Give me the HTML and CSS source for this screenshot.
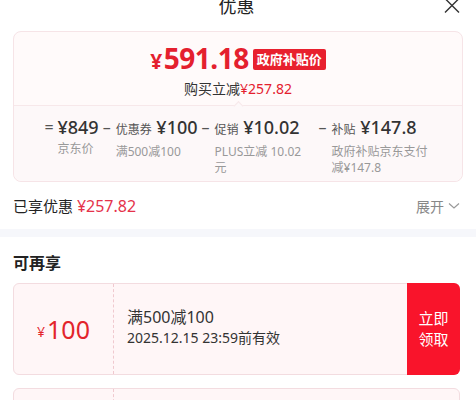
FILE: index.html
```html
<!doctype html>
<html>
<head>
    <meta charset="utf-8">
    <title>优惠</title>
    <link rel="stylesheet" href="styles.css">
</head>
<body>
    <div class="head">
        <span></span>
        <span class="head-title">优惠</span>
        <span class="close">
            <svg width="16" height="15" viewBox="0 0 16 15"><path d="M1 0.5 L15 14.5 M15 0.5 L1 14.5" stroke="#333" stroke-width="1.4" fill="none"/></svg>
        </span>
    </div>

    <div class="price-card">
        <div class="price-top">
            <div class="price-line">
                <span class="price"><span class="yen">¥</span>591.18</span>
                <span class="badge">政府补贴价</span>
            </div>
            <div class="save">购买立减<span class="red">¥257.82</span></div>
        </div>
        <div class="breakdown">
            <div class="item">
                <span class="sign">=</span>
                <div class="item-body">
                    <div class="item-val">¥849</div>
                    <div class="item-label">京东价</div>
                </div>
            </div>
            <div class="item">
                <span class="sign">–</span>
                <div class="item-body">
                    <div class="item-val"><small>优惠券</small> ¥100</div>
                    <div class="item-label">满500减100</div>
                </div>
            </div>
            <div class="item">
                <span class="sign">–</span>
                <div class="item-body">
                    <div class="item-val"><small>促销</small> ¥10.02</div>
                    <div class="item-label">PLUS立减 10.02 元</div>
                </div>
            </div>
            <div class="item">
                <span class="sign">–</span>
                <div class="item-body">
                    <div class="item-val"><small>补贴</small> ¥147.8</div>
                    <div class="item-label">政府补贴京东支付减¥147.8</div>
                </div>
            </div>
        </div>
    </div>

    <div class="enjoyed">
        <span>已享优惠 <span class="red">¥257.82</span></span>
        <span class="expand">展开
            <svg width="12" height="8" viewBox="0 0 12 8"><path d="M1 1.5 L6 6 L11 1.5" stroke="#999" stroke-width="1.2" fill="none"/></svg>
        </span>
    </div>

    <div class="band"></div>

    <div class="more">
        <h3 class="more-title">可再享</h3>
        <div class="coupon">
            <div class="coupon-amount"><span class="yen">¥</span>100</div>
            <div class="coupon-info">
                <div class="coupon-rule">满500减100</div>
                <div class="coupon-date">2025.12.15 23:59前有效</div>
            </div>
            <div class="coupon-btn">立即<br>领取</div>
        </div>
        <div class="coupon coupon-next">
            <div class="coupon-amount"></div>
            <div class="coupon-info"></div>
        </div>
    </div>
</body>
</html>
```

FILE: styles.css
```css
body {
    margin: 0;
    background: #fff;
    color: #333;
    font-family: "Noto Sans", "Noto Sans CJK SC", sans-serif;
    overflow: hidden;
}
.head {
    display: grid;
    grid-template-columns: 1fr auto 1fr;
    align-items: center;
    height: 26px;
    margin-top: -8px;
    padding: 0 16px 0 13px;
}
.head-title {
    font-size: 18px;
    color: #222;
}
.close {
    justify-self: end;
    display: flex;
}
.red {
    color: #e4202e;
}

/* price card */
.price-card {
    margin: 13px 13px 0;
    border: 1px solid #f6e4e7;
    border-radius: 8px;
    background: #fffafa;
}
.price-top {
    position: relative;
    display: flex;
    flex-direction: column;
    align-items: center;
    padding: 8px 0 6px;
    border-bottom: 1px solid #f7e8ea;
}
.price-top::after {
    content: "";
    position: absolute;
    bottom: -1px;
    left: 50%;
    width: 6px;
    height: 6px;
    margin-left: -3px;
    background: #fdf8f9;
    border-left: 1px solid #f7e8ea;
    border-top: 1px solid #f7e8ea;
    transform: translateY(50%) rotate(45deg);
}
.price-line {
    display: flex;
    align-items: center;
    gap: 4px;
}
.price {
    color: #e4202e;
    font-size: 28px;
    font-weight: 700;
    line-height: 36px;
    letter-spacing: -0.5px;
}
.price .yen {
    font-size: 21px;
    margin-right: 2px;
}
.badge {
    background: #e8202e;
    color: #fff;
    font-size: 13px;
    font-weight: 700;
    line-height: 21px;
    padding: 0 4px;
    border-radius: 2px;
}
.save {
    font-size: 14px;
    line-height: 20px;
    color: #333;
}
.breakdown {
    display: flex;
    justify-content: center;
    gap: 4px;
    padding: 9px 0 5px;
    background: #fdf8f9;
    border-radius: 0 0 8px 8px;
}
.item {
    display: flex;
    align-items: flex-start;
}
.sign {
    width: 13px;
    font-size: 16px;
    line-height: 24px;
    color: #555;
}
.item-val {
    font-size: 18px;
    font-weight: 500;
    line-height: 24px;
    color: #333;
    white-space: nowrap;
}
.item-val small {
    font-size: 12px;
    font-weight: 400;
    color: #555;
}
.item-label {
    max-width: 100px;
    margin-top: 2px;
    font-size: 12px;
    line-height: 16px;
    color: #999;
}

/* enjoyed row */
.enjoyed {
    display: flex;
    justify-content: space-between;
    align-items: center;
    padding: 0 16px 0 13px;
    height: 47px;
    font-size: 15px;
    color: #222;
}
.enjoyed .red {
    color: #e5324a;
    font-size: 16px;
}
.expand {
    display: flex;
    align-items: center;
    gap: 4px;
    font-size: 14px;
    color: #888;
}
.band {
    height: 8px;
    background: #f6f7fb;
}

/* coupons */
.more {
    padding: 0 16px 0 13px;
}
.more-title {
    margin: 0;
    padding: 17px 0 10px;
    font-size: 16px;
    line-height: 19px;
    font-weight: 700;
    color: #222;
}
.coupon {
    display: flex;
    height: 90px;
    margin-bottom: 13px;
    border: 1px solid #f3dce0;
    border-radius: 6px;
    background: #fff6f7;
}
.coupon-amount {
    width: 99px;
    display: flex;
    justify-content: center;
    align-items: center;
    border-right: 1px dashed #f0c9cf;
    color: #e3242b;
    font-size: 25px;
}
.coupon-amount .yen {
    font-size: 14px;
    margin: 5px 2px 0 0;
}
.coupon-info {
    flex: 1;
    display: flex;
    flex-direction: column;
    justify-content: center;
    padding-left: 13px;
    padding-bottom: 4px;
    color: #333;
}
.coupon-rule {
    font-size: 16px;
    line-height: 22px;
}
.coupon-date {
    font-size: 14px;
    line-height: 20px;
}
.coupon-btn {
    width: 53px;
    display: flex;
    justify-content: center;
    align-items: center;
    margin: -1px -1px -1px 0;
    background: #f9142b;
    color: #fff;
    font-size: 15px;
    line-height: 21px;
    text-align: center;
    border-radius: 0 6px 6px 0;
}
```
